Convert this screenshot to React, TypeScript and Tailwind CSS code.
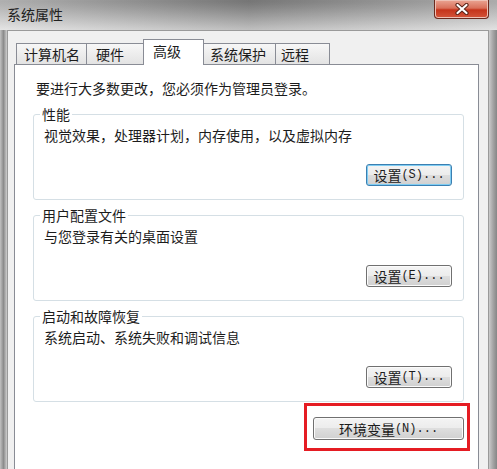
const tabs = [
  { label: '计算机名', cls: 'w-[71px] pl-[7px] border-l' },
  { label: '硬件', cls: 'w-[56px] pl-[9px] border-r-0' },
  { label: '高级', cls: 'w-[61px] pl-[9px]', active: true },
  { label: '系统保护', cls: 'w-[72px] pl-[6px]' },
  { label: '远程', cls: 'w-[54px] pl-[5px]' },
];

const groups = [
  { title: '性能', text: '视觉效果，处理器计划，内存使用，以及虚拟内存', key: 'S', focused: true },
  { title: '用户配置文件', text: '与您登录有关的桌面设置', key: 'E' },
  { title: '启动和故障恢复', text: '系统启动、系统失败和调试信息', key: 'T' },
];

function WinButton({ label, hotkey, focused, className }: { label: string; hotkey: string; focused?: boolean; className?: string }) {
  return (
    <button
      className={`flex items-center justify-center rounded-[3px] border bg-[linear-gradient(#f4f4f4,#ececec_50%,#dedede_50%,#d0d0d0)] text-[14px] leading-[18px] text-[#1c1c1c] ${
        focused
          ? 'border-[#3c7fb1] shadow-[inset_0_0_0_1px_#7fcdf3]'
          : 'border-[#707070] shadow-[inset_0_0_0_1px_#fbfbfb]'
      } ${className ?? ''}`}
    >
      <span>{label}</span>
      <span className="font-['Liberation_Mono',monospace] text-[12px]">({hotkey})...</span>
    </button>
  );
}

function CloseButton() {
  return (
    <div className="absolute top-0 right-[8px] flex h-[19px] w-[55px] items-center justify-center rounded-b-[4px] border border-t-0 border-[#6b2a1e] bg-[linear-gradient(#eaa593,#d9705a_45%,#c5341b_55%,#d4553a)] shadow-[inset_0_0_0_1px_#eec1b5]">
      <svg width="16" height="12" viewBox="0 0 16 12">
        <path d="M3.5 2 L12.5 10 M12.5 2 L3.5 10" stroke="#5a2418" strokeWidth="4.2" strokeLinecap="round" />
        <path d="M3.5 2 L12.5 10 M12.5 2 L3.5 10" stroke="#ffffff" strokeWidth="2.2" strokeLinecap="round" />
      </svg>
    </div>
  );
}

export default function App() {
  return (
    <div className="flex h-[469px] w-[497px] flex-col overflow-hidden bg-[#b5b5b5] font-['Noto_Sans_CJK_SC','Liberation_Sans',sans-serif]">
      {/* Title bar */}
      <div className="relative h-[30px] shrink-0 bg-linear-to-r from-[#d0d0d0] via-[#8c8c8c] to-[#cbcbcb]">
        <div className="flex h-full items-start bg-linear-to-b from-black/15 to-white/45 pl-[7px] pt-[5px]">
          <span className="text-[14px] leading-[18px] text-[#202020]">系统属性</span>
        </div>
        <CloseButton />
      </div>

      <div className="flex min-h-0 flex-1 overflow-hidden">
        <div className="w-[7px] shrink-0 bg-linear-to-r from-[#c2c2c2] via-[#8c8c8c] to-[#cfcfcf]" />

        {/* Client area */}
        <div className="flex flex-1 flex-col border-l border-r border-t border-[#9a9a9a] bg-[#f0f0f0] pl-[6px] pr-[9px] pt-[8px]">
          <div className="flex h-[25px] shrink-0 items-end pl-[2px]">
            {tabs.map((t) =>
              t.active ? (
                <div
                  key={t.label}
                  className={`relative z-10 -mb-px flex h-[26px] items-center border-l border-r border-t border-[#898c95] bg-white pb-[2px] text-[14px] text-[#1c1c1c] ${t.cls}`}
                >
                  {t.label}
                </div>
              ) : (
                <div
                  key={t.label}
                  className={`flex h-[21px] items-center border-r border-t border-[#898c95] bg-linear-to-b from-[#f7f7f7] to-[#e3e3e3] text-[14px] text-[#1c1c1c] ${t.cls}`}
                >
                  {t.label}
                </div>
              )
            )}
          </div>

          {/* Tab panel */}
          <div className="flex shrink-0 flex-col border border-[#898c95] bg-white pb-[40px] pl-[18px] pr-[14px] pt-[13px]">
            <p className="pl-[3px] text-[14px] leading-[20px] text-[#1c1c1c]">要进行大多数更改，您必须作为管理员登录。</p>

            {groups.map((g, i) => (
              <div
                key={g.title}
                className={`relative flex h-[86px] flex-col rounded-[3px] border border-[#d5dfe5] pl-[10px] pr-[11px] pt-[10px] ${i === 0 ? 'mt-[16px]' : 'mt-[15px]'}`}
              >
                <span className="absolute -top-[11px] left-[6px] bg-white px-[2px] text-[14px] leading-[20px] text-[#1c1c1c]">{g.title}</span>
                <p className="text-[14px] leading-[20px] text-[#1c1c1c]">{g.text}</p>
                <WinButton label="设置" hotkey={g.key} focused={g.focused} className="mt-[19px] h-[22px] w-[86px] self-end" />
              </div>
            ))}

            <div className="-mr-[6px] mt-[1px] self-end border-[3px] border-[#e51c23] pb-[8px] pl-[6px] pr-[3px] pt-[11px]">
              <WinButton label="环境变量" hotkey="N" className="h-[23px] w-[151px]" />
            </div>
          </div>
        </div>

        <div className="w-[8px] shrink-0 bg-linear-to-r from-[#cbcbcb] via-[#a5a5a5] to-[#868686]" />
      </div>
    </div>
  );
}
